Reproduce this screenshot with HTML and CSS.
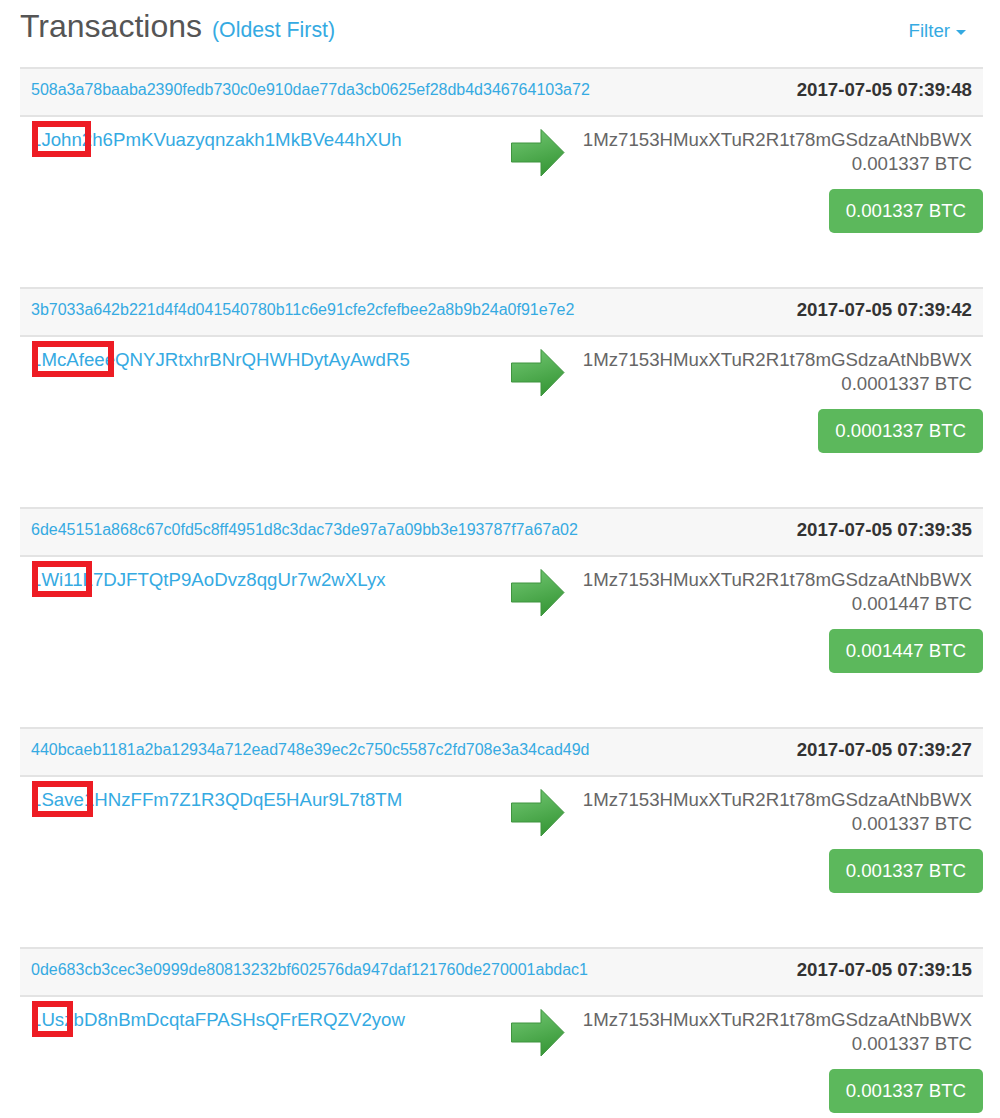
FILE: index.html
```html
<!DOCTYPE html>
<html lang="en">
<head>
    <meta charset="UTF-8">
    <meta name="viewport" content="width=device-width, initial-scale=1.0">
    <title>Transactions</title>
    <link rel="stylesheet" href="styles.css">
</head>
<body>
    <div class="page">
        <div class="title-row">
            <h1>Transactions<a class="order" href="#">(Oldest First)</a></h1>
            <a class="filter" href="#">Filter<span class="caret"></span></a>
        </div>

        <div class="tx">
            <div class="tx-head">
                <a class="tx-hash" href="#">508a3a78baaba2390fedb730c0e910dae77da3cb0625ef28db4d346764103a72</a>
                <span class="tx-time">2017-07-05 07:39:48</span>
            </div>
            <div class="tx-body">
                <div class="tx-from"><a href="#">1<span class="mark">John</span>2h6PmKVuazyqnzakh1MkBVe44hXUh</a></div>
                <div class="tx-arrow"><svg width="54" height="48" viewBox="0 0 54 48"><use href="#arrow"/></svg></div>
                <div class="tx-to">
                    <div>1Mz7153HMuxXTuR2R1t78mGSdzaAtNbBWX</div>
                    <div>0.001337 BTC</div>
                </div>
            </div>
            <div class="tx-foot"><button class="btn-amount">0.001337 BTC</button></div>
        </div>

        <div class="tx">
            <div class="tx-head">
                <a class="tx-hash" href="#">3b7033a642b221d4f4d041540780b11c6e91cfe2cfefbee2a8b9b24a0f91e7e2</a>
                <span class="tx-time">2017-07-05 07:39:42</span>
            </div>
            <div class="tx-body">
                <div class="tx-from"><a href="#">1<span class="mark">McAfee</span>eQNYJRtxhrBNrQHWHDytAyAwdR5</a></div>
                <div class="tx-arrow"><svg width="54" height="48" viewBox="0 0 54 48"><use href="#arrow"/></svg></div>
                <div class="tx-to">
                    <div>1Mz7153HMuxXTuR2R1t78mGSdzaAtNbBWX</div>
                    <div>0.0001337 BTC</div>
                </div>
            </div>
            <div class="tx-foot"><button class="btn-amount">0.0001337 BTC</button></div>
        </div>

        <div class="tx">
            <div class="tx-head">
                <a class="tx-hash" href="#">6de45151a868c67c0fd5c8ff4951d8c3dac73de97a7a09bb3e193787f7a67a02</a>
                <span class="tx-time">2017-07-05 07:39:35</span>
            </div>
            <div class="tx-body">
                <div class="tx-from"><a href="#">1<span class="mark">Wi11</span>L7DJFTQtP9AoDvz8qgUr7w2wXLyx</a></div>
                <div class="tx-arrow"><svg width="54" height="48" viewBox="0 0 54 48"><use href="#arrow"/></svg></div>
                <div class="tx-to">
                    <div>1Mz7153HMuxXTuR2R1t78mGSdzaAtNbBWX</div>
                    <div>0.001447 BTC</div>
                </div>
            </div>
            <div class="tx-foot"><button class="btn-amount">0.001447 BTC</button></div>
        </div>

        <div class="tx">
            <div class="tx-head">
                <a class="tx-hash" href="#">440bcaeb1181a2ba12934a712ead748e39ec2c750c5587c2fd708e3a34cad49d</a>
                <span class="tx-time">2017-07-05 07:39:27</span>
            </div>
            <div class="tx-body">
                <div class="tx-from"><a href="#">1<span class="mark">Save</span>1HNzFFm7Z1R3QDqE5HAur9L7t8TM</a></div>
                <div class="tx-arrow"><svg width="54" height="48" viewBox="0 0 54 48"><use href="#arrow"/></svg></div>
                <div class="tx-to">
                    <div>1Mz7153HMuxXTuR2R1t78mGSdzaAtNbBWX</div>
                    <div>0.001337 BTC</div>
                </div>
            </div>
            <div class="tx-foot"><button class="btn-amount">0.001337 BTC</button></div>
        </div>

        <div class="tx">
            <div class="tx-head">
                <a class="tx-hash" href="#">0de683cb3cec3e0999de80813232bf602576da947daf121760de270001abdac1</a>
                <span class="tx-time">2017-07-05 07:39:15</span>
            </div>
            <div class="tx-body">
                <div class="tx-from"><a href="#">1<span class="mark">Us</span>zbD8nBmDcqtaFPASHsQFrERQZV2yow</a></div>
                <div class="tx-arrow"><svg width="54" height="48" viewBox="0 0 54 48"><use href="#arrow"/></svg></div>
                <div class="tx-to">
                    <div>1Mz7153HMuxXTuR2R1t78mGSdzaAtNbBWX</div>
                    <div>0.001337 BTC</div>
                </div>
            </div>
            <div class="tx-foot"><button class="btn-amount">0.001337 BTC</button></div>
        </div>
    </div>

    <!-- shared arrow shape -->
    <svg class="defs" width="0" height="0">
        <defs>
            <linearGradient id="arrow-fill" x1="0" y1="0" x2="0.35" y2="1">
                <stop offset="0" stop-color="#74c874"/>
                <stop offset="1" stop-color="#3a9a3a"/>
            </linearGradient>
            <polygon id="arrow" points="0.5,14 30,14 30,0.5 53,23.5 30,47 30,33 0.5,33"
                     fill="url(#arrow-fill)" stroke="#3f943f" stroke-width="1"/>
        </defs>
    </svg>
</body>
</html>
```

FILE: styles.css
```css
body {
    margin: 0;
    font-family: "Liberation Sans", Arial, sans-serif;
    color: #333;
    background: #fff;
}
a {
    color: #35aae2;
    text-decoration: none;
}
.page {
    width: 963px;
    margin-left: 20px;
}
.title-row {
    display: flex;
    justify-content: space-between;
    align-items: baseline;
    height: 40px;
    padding-top: 6px;
    margin-bottom: 21px;
}
h1 {
    margin: 0;
    font-size: 32px;
    font-weight: normal;
    line-height: 40px;
    color: #555;
}
.order {
    margin-left: 10px;
    font-size: 21.3px;
    line-height: 1;
}
.filter {
    font-size: 18.67px;
    line-height: 1;
    padding-right: 17px;
}
.caret {
    display: inline-block;
    width: 0;
    height: 0;
    margin-left: 6px;
    vertical-align: middle;
    border-top: 5px solid #35aae2;
    border-left: 5px solid transparent;
    border-right: 5px solid transparent;
}
.tx {
    margin-bottom: 54px;
}
.tx-head {
    display: flex;
    justify-content: space-between;
    align-items: center;
    height: 41px;
    padding: 0 11px 5px;
    background: #f7f7f7;
    border-top: 2px solid #e3e3e3;
    border-bottom: 2px solid #e3e3e3;
}
.tx-hash {
    font-size: 16px;
}
.tx-time {
    font-size: 18.67px;
    font-weight: bold;
    color: #333;
}
.tx-body {
    display: flex;
    padding: 11px 11px 0;
    font-size: 18.67px;
    line-height: 24px;
}
.tx-from {
    width: 480px;
}
.tx-arrow {
    box-sizing: border-box;
    width: 53px;
    height: 48px;
    padding-top: 1px;
}
.tx-arrow svg {
    display: block;
}
.tx-to {
    flex: 1;
    text-align: right;
    color: #666;
}
.tx-foot {
    display: flex;
    justify-content: flex-end;
    padding-top: 13px;
}
.btn-amount {
    height: 44px;
    padding: 0 17px;
    border: 0;
    border-radius: 5px;
    background: #5cb85c;
    color: #fff;
    font-family: "Liberation Sans", Arial, sans-serif;
    font-size: 18.67px;
    cursor: pointer;
}
.mark {
    position: relative;
}
.mark::after {
    content: "";
    position: absolute;
    left: -9px;
    right: -9px;
    top: -8px;
    bottom: -7px;
    border: 6px solid #ed1c24;
}
.defs {
    position: absolute;
}
```
